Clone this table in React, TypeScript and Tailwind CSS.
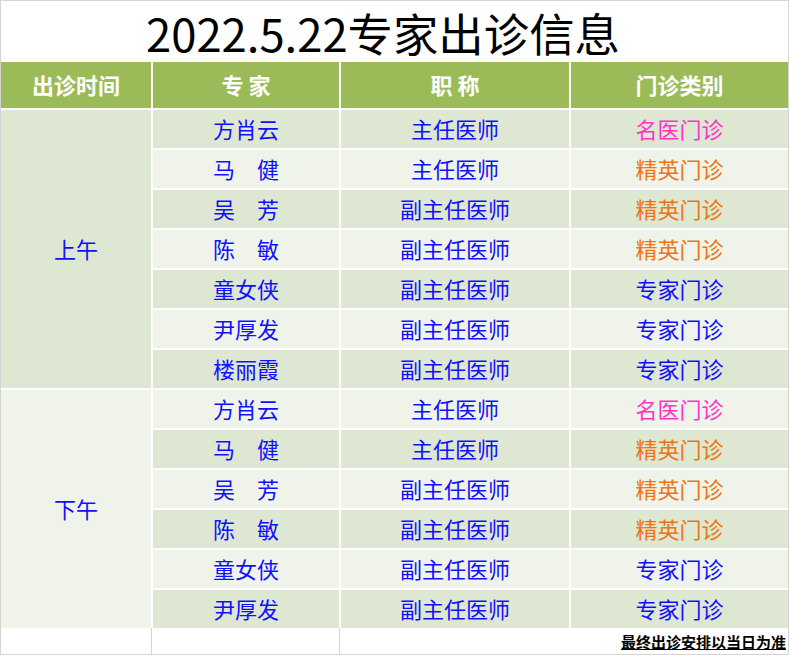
import React from 'react';

type Row = {
  name: string;
  title: string;
  clinic: string;
};

const morning: Row[] = [
  { name: '方肖云', title: '主任医师', clinic: '名医门诊' },
  { name: '马　健', title: '主任医师', clinic: '精英门诊' },
  { name: '吴　芳', title: '副主任医师', clinic: '精英门诊' },
  { name: '陈　敏', title: '副主任医师', clinic: '精英门诊' },
  { name: '童女侠', title: '副主任医师', clinic: '专家门诊' },
  { name: '尹厚发', title: '副主任医师', clinic: '专家门诊' },
  { name: '楼丽霞', title: '副主任医师', clinic: '专家门诊' },
];

const afternoon: Row[] = morning.slice(0, 6);

const clinicColor = (clinic: string) => {
  if (clinic === '名医门诊') return 'text-[#ff33cc]';
  if (clinic === '精英门诊') return 'text-[#ee7412]';
  return 'text-[#1010ff]';
};

const font = { fontFamily: '"Noto Sans CJK SC", "Noto Sans", sans-serif' };

const App: React.FC = () => {
  const rows = [...morning, ...afternoon];

  return (
    <div className="w-[789px] h-[655px] bg-white border border-[#d4d4d4]" style={font}>
      <div className="h-[61px] flex items-center pl-[145px] pt-[3px]">
        <h1 className="text-[45.4px] leading-none text-black">2022.5.22专家出诊信息</h1>
      </div>

      <div className="grid grid-cols-[150px_186px_228px_217px] grid-rows-[46px_repeat(13,38px)] gap-[2px] bg-white leading-none">
        {['出诊时间', '专 家', '职 称', '门诊类别'].map((h) => (
          <div key={h} className="bg-[#9bbb59] flex items-center justify-center pb-[3px] text-white font-bold text-[22px]">
            {h}
          </div>
        ))}

        <div className="row-span-7 col-start-1 row-start-2 bg-[#dee7d1] flex items-center justify-center pb-[3px] text-[22px] text-[#1010ff]">
          上午
        </div>
        <div className="row-span-6 col-start-1 row-start-9 bg-[#eff3e9] flex items-center justify-center pb-[3px] text-[22px] text-[#1010ff]">
          下午
        </div>

        {rows.map((r, i) => {
          const bg = i % 2 === 0 ? 'bg-[#dee7d1]' : 'bg-[#eff3e9]';
          return (
            <React.Fragment key={i}>
              <div className={`${bg} col-start-2 flex items-center justify-center pb-[3px] text-[22px] text-[#1010ff]`}>{r.name}</div>
              <div className={`${bg} flex items-center justify-center pb-[3px] text-[22px] text-[#1010ff]`}>{r.title}</div>
              <div className={`${bg} flex items-center justify-center pb-[3px] text-[22px] ${clinicColor(r.clinic)}`}>{r.clinic}</div>
            </React.Fragment>
          );
        })}
      </div>

      <div className="flex h-[26px]">
        <div className="w-[151px] border-r border-[#d4d4d4]" />
        <div className="w-[188px] border-r border-[#d4d4d4]" />
        <div className="flex-1 flex items-center justify-end pr-[2px] pt-[2px]">
          <div className="flex flex-col items-stretch">
            <span className="text-[15px] font-bold leading-none text-black">最终出诊安排以当日为准</span>
            <div className="h-[1.5px] bg-black" />
          </div>
        </div>
      </div>
    </div>
  );
};

export default App;
